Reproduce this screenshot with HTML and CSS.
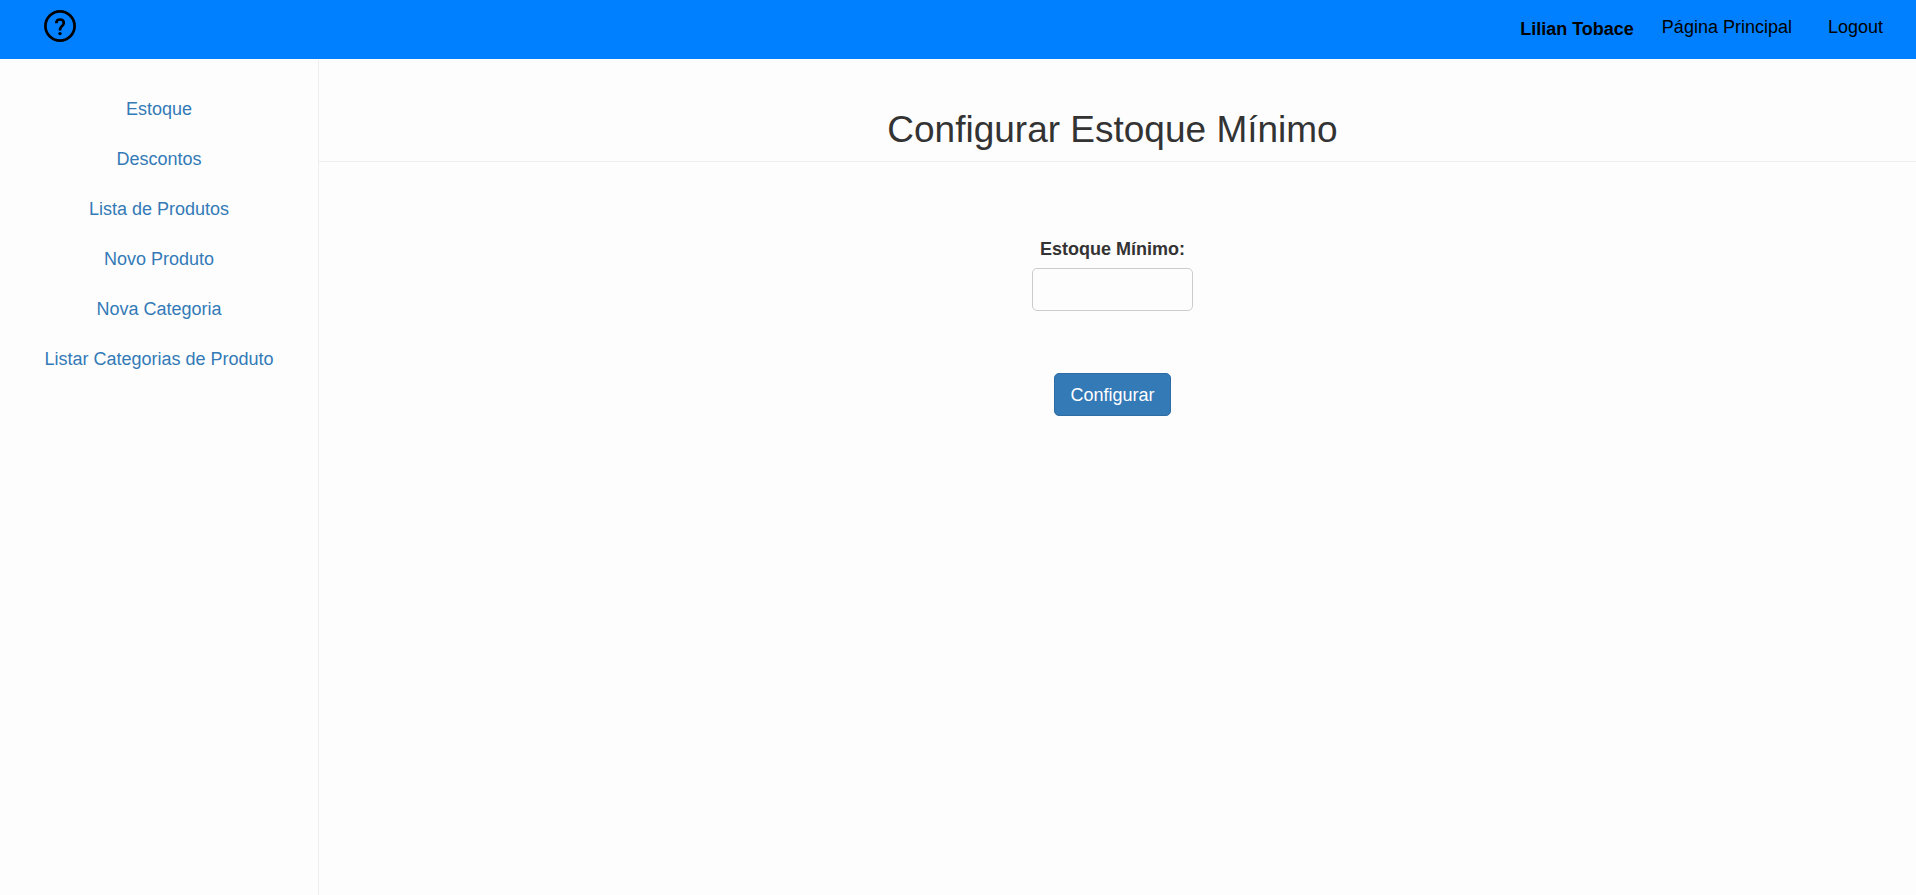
FILE: index.html
```html
<!DOCTYPE html>
<html lang="pt-BR">
<head>
<meta charset="utf-8">
<title>Configurar Estoque Mínimo</title>
<link rel="stylesheet" href="styles.css">
</head>
<body>
<header class="topbar">
  <a class="help" href="#" aria-label="Ajuda">
    <svg class="help-icon" viewBox="0 0 32 32" fill="none" stroke="#000" aria-hidden="true">
      <circle cx="16" cy="16" r="14.6" stroke-width="2.7"/>
      <path d="M12.300 13.300C12.300 10.900 13.800 9.500 16 9.500s3.800 1.400 3.800 3.500c0 1.900-1 2.600-2.200 3.500C16.400 17.400 16 18.100 16 20.600" stroke-width="2.7"/>
      <circle cx="16" cy="23.600" r="1.700" fill="#000" stroke="none"/>
    </svg>
  </a>
  <nav class="account">
    <strong class="user">Lilian Tobace</strong>
    <a class="account-link" href="#">Página Principal</a>
    <a class="account-link" href="#">Logout</a>
  </nav>
</header>
<div class="layout">
  <nav class="sidebar">
    <a href="#">Estoque</a>
    <a href="#">Descontos</a>
    <a href="#">Lista de Produtos</a>
    <a href="#">Novo Produto</a>
    <a href="#">Nova Categoria</a>
    <a href="#">Listar Categorias de Produto</a>
  </nav>
  <main class="content">
    <h1 class="title">Configurar Estoque Mínimo</h1>
    <form class="form">
      <label class="label" for="minimo">Estoque Mínimo:</label>
      <input class="field" id="minimo" type="text">
      <button class="submit" type="button">Configurar</button>
    </form>
  </main>
</div>
</body>
</html>
```
FILE: styles.css
```css
* {
  box-sizing: border-box;
}

body {
  margin: 0;
  min-height: 100vh;
  display: flex;
  flex-direction: column;
  background: #fdfdfd;
  color: #333;
  font-family: "Liberation Sans", Arial, sans-serif;
  font-size: 18px;
  line-height: 26px;
}

a {
  color: #337ab7;
  text-decoration: none;
}

.topbar {
  display: flex;
  justify-content: space-between;
  align-items: flex-start;
  height: 59px;
  padding: 10px 33px 0 44px;
  background: #0080ff;
}

.help-icon {
  display: block;
  width: 32px;
  height: 32px;
}

.account {
  display: flex;
  padding-top: 4px;
}

.user {
  margin-right: 28px;
  padding-top: 2px;
  color: #000;
}

.account-link {
  color: #000;
}

.account-link + .account-link {
  margin-left: 36px;
}

.layout {
  flex: 1;
  display: flex;
  padding-top: 1px;
}

.sidebar {
  flex: 0 0 319px;
  display: flex;
  flex-direction: column;
  padding-top: 24px;
  border-right: 1px solid #eee;
  text-align: center;
}

.sidebar a {
  padding: 12px 0;
}

.content {
  flex: 1;
}

.title {
  margin: 0;
  padding: 48px 10px 10px 0;
  border-bottom: 1px solid #eee;
  font-size: 37px;
  font-weight: 400;
  line-height: 43px;
  text-align: center;
}

.form {
  display: flex;
  flex-direction: column;
  align-items: center;
  padding: 74px 10px 0 0;
}

.label {
  margin-bottom: 6px;
  font-weight: 700;
}

.field {
  width: 161px;
  height: 43px;
  margin-bottom: 62px;
  padding: 8px 15px;
  border: 1px solid #ccc;
  border-radius: 5px;
  background: transparent;
  color: #555;
  font: inherit;
}

.submit {
  height: 43px;
  padding: 0 15px;
  border: 1px solid #2e6da4;
  border-radius: 5px;
  background: #337ab7;
  color: #fff;
  font: inherit;
}
```
